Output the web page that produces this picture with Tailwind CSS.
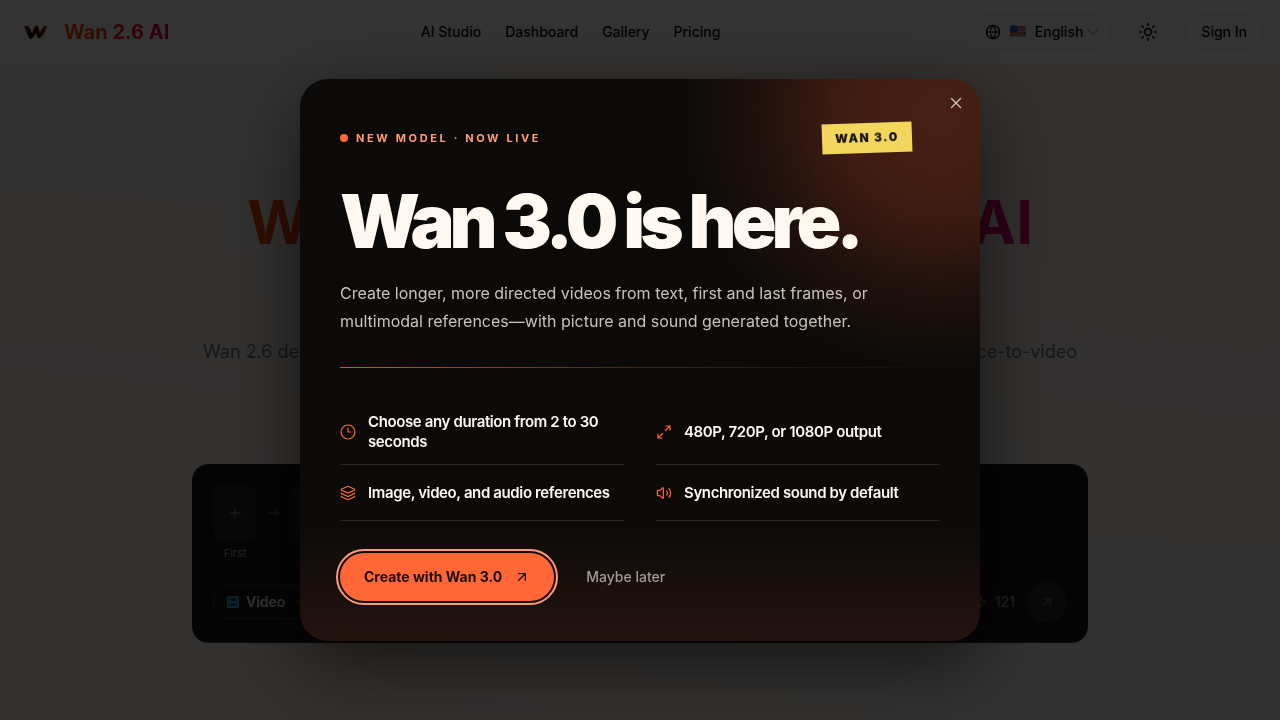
<!DOCTYPE html>
<html lang="en">
<head>
  <meta charset="UTF-8">
  <meta name="viewport" content="width=device-width, initial-scale=1.0">
  <title>Wan 2.6 AI</title>
  <script src="https://cdn.jsdelivr.net/npm/@tailwindcss/browser@4"></script>
</head>
<body class="h-screen overflow-hidden bg-[#fcfaf8] font-['Inter',sans-serif] text-neutral-950">

  <!-- Page -->
  <div class="flex h-full flex-col bg-[radial-gradient(ellipse_at_0%_100%,#fdf2e9_0%,transparent_60%),radial-gradient(ellipse_at_100%_10%,#fdf2ea_0%,transparent_60%)]">
    <header class="flex h-16 shrink-0 items-center justify-between bg-white px-4">
      <a href="#" class="flex items-center gap-3">
        <svg class="ml-1 size-8" viewBox="0 0 32 32" fill="none" aria-hidden="true">
          <defs>
            <linearGradient id="logo" x1="0" y1="0" x2="1" y2="0">
              <stop offset="0" stop-color="#a04a20"/>
              <stop offset=".3" stop-color="#1a0500"/>
              <stop offset=".6" stop-color="#3a0a00"/>
              <stop offset="1" stop-color="#a03020"/>
            </linearGradient>
          </defs>
          <path d="M4 10c3-1 5 0 6 3l2 4 3-7h3l2 7c1-3 3-8 7-7-1 5-4 10-7 12-3 1-3-3-4-5-2 3-3 6-6 6-2-1-4-9-6-13z" fill="url(#logo)"/>
        </svg>
        <span class="bg-linear-to-r from-orange-600 to-rose-600 bg-clip-text text-xl font-bold text-transparent">Wan 2.6 AI</span>
      </a>
      <nav class="flex items-center gap-6 text-sm font-medium">
        <a href="#">AI Studio</a>
        <a href="#">Dashboard</a>
        <a href="#">Gallery</a>
        <a href="#">Pricing</a>
      </nav>
      <div class="flex items-center gap-4">
        <button class="flex h-9 items-center rounded-full border border-neutral-200 px-3 text-sm font-medium">
          <svg class="size-4" viewBox="0 0 24 24" fill="none" stroke="currentColor" stroke-width="2" aria-hidden="true"><circle cx="12" cy="12" r="10"/><path d="M12 2a14.5 14.5 0 0 0 0 20 14.5 14.5 0 0 0 0-20M2 12h20"/></svg>
          <svg class="mx-2 mb-0.5 h-3 w-[18px]" viewBox="0 0 18 12" aria-hidden="true"><path d="M1 1q4-1 8 0t8 0v10q-4 1-8 0t-8 0z" fill="#c9a9a9"/><path d="M1 2h16M1 5h16M1 8h16M1 10.500h16" stroke="#c04a48" stroke-width="1.5"/><path d="M1 1q4-1 8 0v6H1z" fill="#3558a8"/></svg>
          <span>English</span>
          <svg class="ml-1 size-3 text-neutral-500" viewBox="0 0 24 24" fill="none" stroke="currentColor" stroke-width="2" aria-hidden="true"><path d="m2 7 10 10L22 7"/></svg>
        </button>
        <button class="flex size-10 items-center justify-center" aria-label="Toggle theme">
          <svg class="size-5" viewBox="0 0 24 24" fill="none" stroke="currentColor" stroke-width="2" stroke-linecap="round"><circle cx="12" cy="12" r="4"/><path d="M12 2v2M12 20v2M4.9 4.9l1.4 1.4M17.7 17.7l1.4 1.4M2 12h2M20 12h2M6.3 17.7l-1.4 1.4M19.1 4.9l-1.4 1.4"/></svg>
        </button>
        <a href="#" class="flex h-9 items-center rounded-full border border-neutral-200 px-4 text-sm font-medium">Sign In</a>
      </div>
    </header>

    <main class="flex flex-col items-center pt-32">
      <h1 class="flex w-full max-w-[786px] justify-between bg-linear-to-r from-orange-600 via-red-600 to-pink-600 bg-clip-text text-6xl font-bold leading-[60px] text-transparent">
        <span>Wan 2.6</span> <span>Video AI</span>
      </h1>
      <p class="mt-[86px] flex w-full max-w-[874px] justify-between text-lg text-neutral-500">
        <span>Wan 2.6 delivers text-to-video,</span> <span>and reference-to-video</span>
      </p>
      <section class="mt-[98px] flex w-full max-w-4xl flex-col gap-[21px] rounded-2xl border border-neutral-800 bg-[#181818] p-5 text-neutral-300">
        <div class="flex items-start gap-2">
          <div class="flex flex-col items-center gap-1">
            <button class="flex h-14 w-11 items-center justify-center rounded-xl bg-[#262626] text-neutral-500" aria-label="Add first frame">
              <svg class="size-4" viewBox="0 0 24 24" fill="none" stroke="currentColor" stroke-width="2"><path d="M4 12h16M12 4v16"/></svg>
            </button>
            <span class="text-[11px] leading-4 text-neutral-400">First</span>
          </div>
          <div class="flex h-14 w-4 items-center text-neutral-600">
            <svg class="size-4" viewBox="0 0 24 24" fill="none" stroke="currentColor" stroke-width="2" aria-hidden="true"><path d="M4 12h16M15 7l5 5-5 5"/></svg>
          </div>
          <button class="h-14 w-11 rounded-xl bg-[#262626]" aria-label="Add last frame"></button>
        </div>
        <div class="flex items-center justify-between">
          <button class="flex h-[34px] items-center gap-1.5 rounded-full border border-neutral-700 px-3 text-sm font-semibold text-white">
            <svg class="size-3.5" viewBox="0 0 14 14" aria-hidden="true"><rect x="1" y="1" width="12" height="12" rx="1" fill="#22b8cf"/><path d="M5 3h4v3H5zM5 8h4v3H5z" fill="#112233"/><path d="M3 2v10M11 2v10" stroke="#112233" stroke-dasharray="1 1"/></svg>
            Video
            <svg class="ml-1 size-3 text-neutral-400" viewBox="0 0 24 24" fill="none" stroke="currentColor" stroke-width="2" aria-hidden="true"><path d="m3 8 9 9 9-9"/></svg>
          </button>
          <div class="flex items-center gap-3 text-sm font-medium">
            <span class="flex items-center gap-2 text-neutral-400">
              <svg class="size-3" viewBox="0 0 24 24" fill="none" stroke="currentColor" stroke-width="2" aria-hidden="true"><path d="M13 2 3 14h8l-1 8 11-12h-8z"/></svg>
              121
            </span>
            <button class="flex size-10 items-center justify-center rounded-full bg-[#2c2c30] text-neutral-500" aria-label="Generate">
              <svg class="size-4" viewBox="0 0 24 24" fill="none" stroke="currentColor" stroke-width="2"><path d="M7 7h10v10M7 17 17 7"/></svg>
            </button>
          </div>
        </div>
      </section>
    </main>
  </div>

  <!-- Announcement modal -->
  <div class="fixed inset-0 flex items-center justify-center bg-black/80">
    <div role="dialog" aria-modal="true" aria-labelledby="modal-title" class="relative w-full max-w-[680px] overflow-hidden rounded-[28px] bg-[#0b0a08] bg-[radial-gradient(circle_at_94%_6%,#482014_0,#3e1b12_100px,#1f110c_180px,#0b0a0800_262px),linear-gradient(to_top,#24130f_0,#0b0a0800_122px)] px-10 pt-11 pb-10 text-[#fff8f1] shadow-[0_24px_80px_rgba(0,0,0,0.6)]">
      <button class="absolute top-3 right-3 flex size-6 items-center justify-center text-[#d0c0b8]" aria-label="Close">
        <svg class="size-[18px]" viewBox="0 0 24 24" fill="none" stroke="currentColor" stroke-width="1.8" stroke-linecap="round"><path d="M18 6 6 18M6 6l12 12"/></svg>
      </button>

      <div class="flex items-center justify-between pr-7">
        <p class="flex items-center gap-2 text-[11px] font-bold tracking-[0.24em] text-[#ff9b7a] uppercase">
          <span class="size-2 rounded-full bg-[#ff6836]"></span>
          New model · Now live
        </p>
        <span class="-rotate-2 bg-[#f2d75c] px-[13px] py-[7px] text-xs leading-4 font-black tracking-[0.12em] text-[#17130c]">WAN 3.0</span>
      </div>

      <h2 id="modal-title" class="mt-8 text-[74px] leading-[72px] font-black tracking-[-0.067em] whitespace-nowrap">Wan 3.0 is here.</h2>
      <p class="mt-[22px] max-w-[560px] text-base leading-7 text-[#c9c2ba]">Create longer, more directed videos from text, first and last frames, or multimodal references—with picture and sound generated together.</p>

      <div class="mt-8 h-px bg-[linear-gradient(90deg,#d4562c,#33291f_50%,#0b0a0800)]"></div>

      <ul class="mt-8 grid grid-cols-2 gap-x-8 text-[15px] leading-5 font-semibold tracking-[-0.025em]">
        <li class="flex min-h-14 items-center gap-3 border-b border-white/12 py-3">
          <svg class="size-4 shrink-0 text-[#ff6836]" viewBox="0 0 24 24" fill="none" stroke="currentColor" stroke-width="1.8" stroke-linecap="round" stroke-linejoin="round" aria-hidden="true"><circle cx="12" cy="12" r="10.5"/><path d="M12 6v6h4"/></svg>
          Choose any duration from 2 to 30 seconds
        </li>
        <li class="flex min-h-14 items-center gap-3 border-b border-white/12 py-3">
          <svg class="size-4 shrink-0 text-[#ff6836]" viewBox="0 0 24 24" fill="none" stroke="currentColor" stroke-width="1.8" stroke-linecap="round" stroke-linejoin="round" aria-hidden="true"><path d="M15 3h6v6M21 3l-7 7M3 21l7-7M9 21H3v-6"/></svg>
          480P, 720P, or 1080P output
        </li>
        <li class="flex min-h-14 items-center gap-3 border-b border-white/12 py-3">
          <svg class="size-4 shrink-0 text-[#ff6836]" viewBox="0 0 24 24" fill="none" stroke="currentColor" stroke-width="1.8" stroke-linecap="round" stroke-linejoin="round" aria-hidden="true"><path d="M12.8 2.2a2 2 0 0 0-1.6 0L2.6 6.1a1 1 0 0 0 0 1.8l8.6 3.9a2 2 0 0 0 1.6 0l8.6-3.9a1 1 0 0 0 0-1.8z"/><path d="M2 12a1 1 0 0 0 .6.9l8.6 3.9a2 2 0 0 0 1.6 0l8.6-3.9A1 1 0 0 0 22 12"/><path d="M2 17a1 1 0 0 0 .6.9l8.6 3.9a2 2 0 0 0 1.6 0l8.6-3.9A1 1 0 0 0 22 17"/></svg>
          Image, video, and audio references
        </li>
        <li class="flex min-h-14 items-center gap-3 border-b border-white/12 py-3">
          <svg class="size-4 shrink-0 text-[#ff6836]" viewBox="0 0 24 24" fill="none" stroke="currentColor" stroke-width="1.8" stroke-linecap="round" stroke-linejoin="round" aria-hidden="true"><path d="M11 4.7a.7.7 0 0 0-1.2-.5L6.4 7.6A1.4 1.4 0 0 1 5.4 8H3a1 1 0 0 0-1 1v6a1 1 0 0 0 1 1h2.4a1.4 1.4 0 0 1 1 .4l3.4 3.4a.7.7 0 0 0 1.2-.5z"/><path d="M16 9a5 5 0 0 1 0 6M19.4 5.6a9 9 0 0 1 0 12.8"/></svg>
          Synchronized sound by default
        </li>
      </ul>

      <div class="mt-8 flex items-center gap-2 text-sm">
        <button class="flex h-12 items-center gap-3 rounded-full bg-[#ff6836] px-6 font-bold text-[#1c0c06] outline-2 outline-offset-2 outline-[#ff9b7a]">
          Create with Wan 3.0
          <svg class="size-4" viewBox="0 0 24 24" fill="none" stroke="currentColor" stroke-width="2" stroke-linecap="round" stroke-linejoin="round" aria-hidden="true"><path d="M7 7h10v10M7 17 17 7"/></svg>
        </button>
        <button class="h-12 px-6 font-medium text-[#a39b94]">Maybe later</button>
      </div>
    </div>
  </div>
</body>
</html>
